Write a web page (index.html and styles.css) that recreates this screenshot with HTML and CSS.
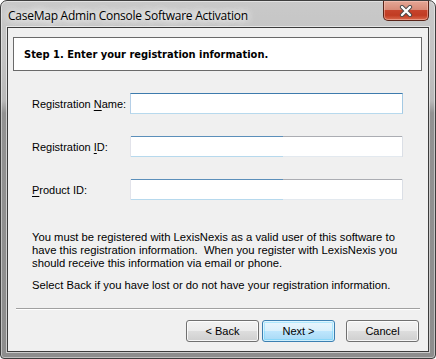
FILE: index.html
```html
<!DOCTYPE html>
<html>
<head>
<meta charset="utf-8">
<link rel="stylesheet" href="styles.css">
</head>
<body>
<div class="window">
  <div class="titlebar">
    <span class="title">CaseMap Admin Console Software Activation</span>
    <div class="close">
      <svg width="14" height="12" viewBox="0 0 14 12">
        <path d="M3 2 L11 10 M11 2 L3 10" stroke="#4a4a4a" stroke-width="4.2" stroke-linecap="round" fill="none"/>
        <path d="M3 2 L11 10 M11 2 L3 10" stroke="#ffffff" stroke-width="2.4" stroke-linecap="round" fill="none"/>
      </svg>
    </div>
  </div>
  <div class="client">
    <div class="header">Step 1. Enter your registration information.</div>
    <div class="form">
      <div class="row">
        <label class="label">Registration <u>N</u>ame:</label>
        <div class="input input-hover"></div>
      </div>
      <div class="row">
        <label class="label">Registration <u>I</u>D:</label>
        <div class="input input-partial"></div>
      </div>
      <div class="row">
        <label class="label"><u>P</u>roduct ID:</label>
        <div class="input input-partial"></div>
      </div>
    </div>
    <p class="text first">You must be registered with LexisNexis as a valid user of this software to<br>have this registration information.&nbsp; When you register with LexisNexis you<br>should receive this information via email or phone.</p>
    <p class="text second">Select Back if you have lost or do not have your registration information.</p>
    <div class="separator"></div>
    <div class="buttons">
      <button class="btn">&lt; Back</button>
      <button class="btn btn-default">Next &gt;</button>
      <button class="btn btn-cancel">Cancel</button>
    </div>
  </div>
</div>
</body>
</html>
```
FILE: styles.css
```css
html, body {
  margin: 0;
  padding: 0;
  background: #ffffff;
}

.window {
  width: 436px;
  height: 359px;
  box-sizing: border-box;
  border: 1px solid #3e3e3e;
  border-radius: 7px 7px 4px 4px;
  padding: 0 6px 6px 6px;
  display: flex;
  flex-direction: column;
  background: linear-gradient(to bottom, #c9c9c9 0px, #c2c2c2 60px, #b8b8b8 100px, #929292 112px, #8d8d8d 100%);
  box-shadow: inset 0 0 0 1px rgba(255, 255, 255, 0.45);
}

.titlebar {
  height: 26px;
  display: flex;
  justify-content: space-between;
  align-items: flex-start;
}

.title {
  font-family: "Open Sans", "Noto Sans", sans-serif;
  font-size: 12px;
  letter-spacing: -0.25px;
  color: #000;
  margin-top: 6px;
  margin-left: 1px;
  text-shadow: 0 0 8px #fff, 0 0 8px #fff, 0 0 12px #fff;
}

.close {
  width: 46px;
  height: 20px;
  box-sizing: border-box;
  border: 1px solid #5a2418;
  border-top: none;
  border-radius: 0 0 5px 5px;
  display: flex;
  align-items: center;
  justify-content: center;
  background: linear-gradient(to bottom, #e4a796 0%, #d88b78 45%, #c6432b 50%, #c13b22 75%, #d9694d 100%);
  box-shadow: inset 0 0 0 1px rgba(255, 210, 200, 0.45);
}

.client {
  flex: 1;
  background: #f0f0f0;
  border: 1px solid #3c3c3c;
  box-shadow: 0 0 0 1px rgba(255, 255, 255, 0.55);
  display: flex;
  flex-direction: column;
  font-family: "Liberation Sans", Arial, sans-serif;
  font-size: 11px;
  color: #000;
}

.header {
  margin: 9px 6px 0 5px;
  height: 34px;
  box-sizing: border-box;
  border: 1px solid #6a6a6a;
  background: #ffffff;
  display: flex;
  align-items: center;
  padding-left: 10px;
  font-family: "DejaVu Sans Condensed", "DejaVu Sans", sans-serif;
  font-stretch: condensed;
  font-weight: bold;
  font-size: 11px;
  color: #000;
}

.form {
  margin-top: 22px;
  padding-left: 24px;
  display: flex;
  flex-direction: column;
  gap: 22px;
}

.row {
  display: flex;
  align-items: center;
  height: 21px;
}

.label {
  width: 98px;
  flex: none;
}

.label u {
  text-decoration-thickness: 1px;
  text-underline-offset: 2px;
}

.input {
  width: 273px;
  height: 21px;
  box-sizing: border-box;
  background: #ffffff;
}

.input-hover {
  border-top: 1px solid #3d7bad;
  border-left: 1px solid #b5cfe7;
  border-right: 1px solid #a4c9e3;
  border-bottom: 1px solid #b7d9ed;
}

.input-partial {
  border-left: 1px solid #e2e3ea;
  border-right: 1px solid #dbdfe6;
  background:
    linear-gradient(to right, #5b8fba 56%, #abadb3 56%) top / 100% 1px no-repeat,
    linear-gradient(to right, #b7d9ed 56%, #e3e9ef 56%) bottom / 100% 1px no-repeat,
    #ffffff;
}

.text {
  margin: 0;
  padding-left: 24px;
  font-size: 11.25px;
  line-height: 13px;
  white-space: nowrap;
}

.text.first {
  margin-top: 31px;
}

.text.second {
  margin-top: 9px;
}

.separator {
  margin: 16px 8px 0 8px;
  height: 1px;
  background: #a0a0a0;
  border-bottom: 1px solid #ffffff;
}

.buttons {
  margin-top: 10px;
  display: flex;
  justify-content: flex-end;
  padding-right: 9px;
}

.btn {
  width: 73px;
  height: 22px;
  box-sizing: border-box;
  border: 1px solid #707070;
  border-radius: 3px;
  font-family: "Liberation Sans", Arial, sans-serif;
  font-size: 11px;
  color: #000;
  padding: 0;
  background: linear-gradient(to bottom, #f2f2f2 0%, #ebebeb 50%, #dddddd 51%, #cfcfcf 100%);
  box-shadow: inset 0 0 0 1px rgba(255, 255, 255, 0.8);
}

.btn-default {
  margin-left: 3px;
  border-color: #3c7fb1;
  background: linear-gradient(to bottom, #eaf6fd 0%, #d9f0fc 50%, #bee6fd 51%, #a7d9f5 100%);
  box-shadow: inset 0 0 0 1px rgba(255, 255, 255, 0.6), inset 0 0 0 2px rgba(72, 210, 255, 0.35);
}

.btn-cancel {
  margin-left: 11px;
}
```
